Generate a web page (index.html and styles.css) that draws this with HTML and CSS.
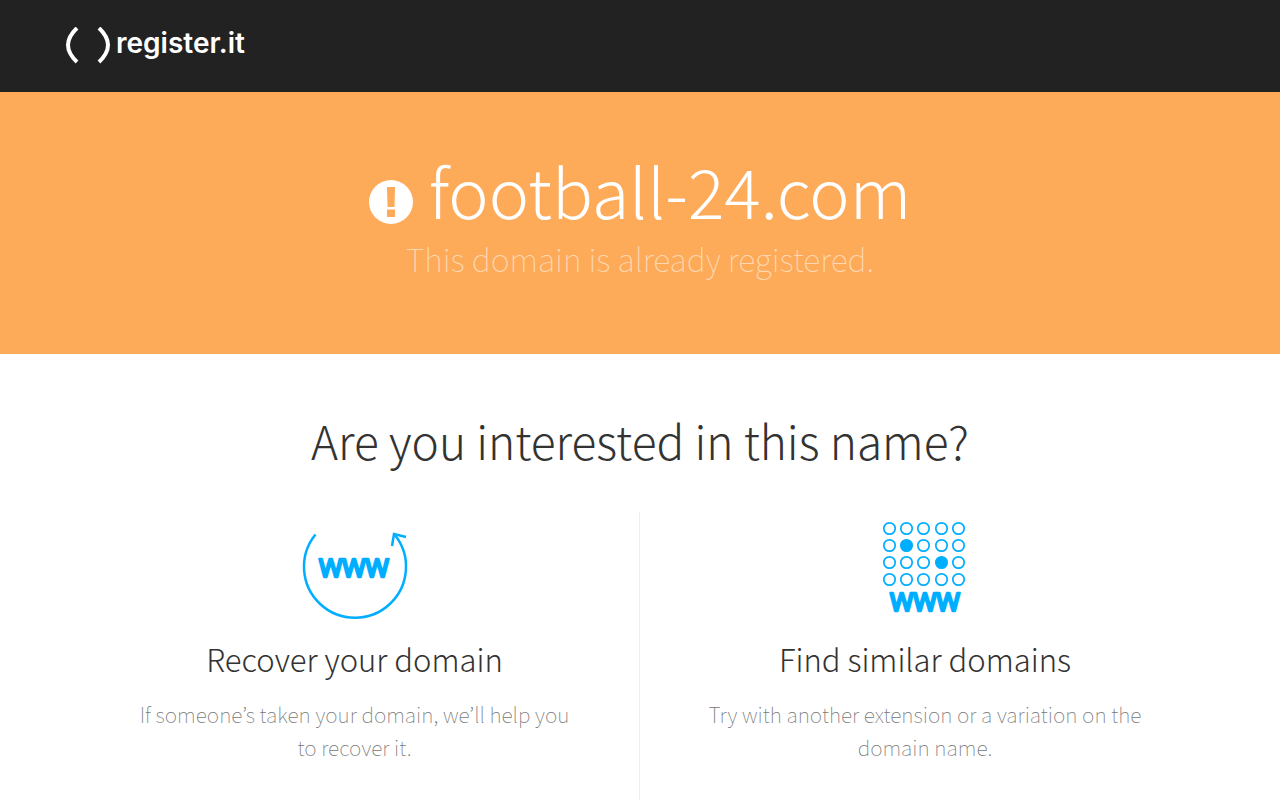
FILE: index.html
```
<!DOCTYPE html>
<html lang="en">

<head>
  <meta charset="UTF-8">
  <meta name="viewport" content="width=device-width, initial-scale=1">
  <title>football-24.com</title>
  <link rel="stylesheet" href="styles.css">
</head>

<body>
  <header class="header">
    <a class="logo" href="#">
      <svg class="logo-mark" width="46" height="38" viewBox="0 0 46 38" aria-hidden="true">
        <path d="M12 1 Q-6 18 12 35 M34 1 Q52 18 34 35" />
      </svg>
      <span class="logo-name">register.it</span>
    </a>
  </header>

  <section class="banner">
    <h1 class="banner-title">
      <svg class="banner-icon" width="44" height="44" viewBox="0 0 44 44" aria-hidden="true">
        <circle cx="22" cy="22" r="22" />
        <path d="M18 7h8l-.5 20h-7zM18 29.500h8v7.500h-8z" />
      </svg>
      <span>football-24.com</span>
    </h1>
    <p class="banner-text">This domain is already registered.</p>
  </section>

  <main class="main">
    <h2 class="main-title">Are you interested in this name?</h2>
    <div class="columns">
      <div class="column">
        <svg class="column-icon" width="110" height="110" viewBox="0 0 110 110" aria-hidden="true">
          <path class="line" d="M15.500 22.500 A51 51 0 1 0 94.500 22.500" />
          <path class="line" d="M92 34 L94 22 L106 25" />
          <text class="www" x="54" y="65" text-anchor="middle">WWW</text>
        </svg>
        <h3 class="column-title">Recover your domain</h3>
        <p class="column-text">If someone’s taken your domain, we’ll help you to recover it.</p>
      </div>
      <div class="column">
        <svg class="column-icon" width="110" height="110" viewBox="0 0 110 110" aria-hidden="true">
          <g class="dots">
            <circle cx="19.500" cy="16.500" r="5.700" /><circle cx="36.500" cy="16.500" r="5.700" /><circle cx="53.500" cy="16.500" r="5.700" /><circle cx="71.500" cy="16.500" r="5.700" /><circle cx="88.500" cy="16.500" r="5.700" />
            <circle cx="19.500" cy="33.500" r="5.700" /><circle class="full" cx="36.500" cy="33.500" r="5.700" /><circle cx="53.500" cy="33.500" r="5.700" /><circle cx="71.500" cy="33.500" r="5.700" /><circle cx="88.500" cy="33.500" r="5.700" />
            <circle cx="19.500" cy="50.500" r="5.700" /><circle cx="36.500" cy="50.500" r="5.700" /><circle cx="53.500" cy="50.500" r="5.700" /><circle class="full" cx="71.500" cy="50.500" r="5.700" /><circle cx="88.500" cy="50.500" r="5.700" />
            <circle cx="19.500" cy="67.500" r="5.700" /><circle cx="36.500" cy="67.500" r="5.700" /><circle cx="53.500" cy="67.500" r="5.700" /><circle cx="71.500" cy="67.500" r="5.700" /><circle cx="88.500" cy="67.500" r="5.700" />
          </g>
          <text class="www" x="55" y="99" text-anchor="middle">WWW</text>
        </svg>
        <h3 class="column-title">Find similar domains</h3>
        <p class="column-text">Try with another extension or a variation on the domain name.</p>
      </div>
    </div>
  </main>
</body>

</html>
```
FILE: styles.css
```
* {
  margin: 0;
  padding: 0;
  box-sizing: border-box;
}
body {
  font-family: "Noto Sans CJK KR", "Noto Sans", sans-serif;
  font-weight: 300;
  color: #333;
  background: #fff;
}

/* header */
.header {
  padding: 20px 65px;
  background: #222;
}
.logo {
  display: inline-flex;
  align-items: center;
  gap: 5px;
  height: 52px;
  color: #fff;
  text-decoration: none;
}
.logo-mark {
  fill: none;
  stroke: #fff;
  stroke-width: 4;
}
.logo-name {
  font: 600 28px/40px Inter, sans-serif;
  padding-bottom: 6px;
}

/* banner */
.banner {
  padding: 56px 20px 74px;
  text-align: center;
  color: #fff;
  background: #fdaa59;
}
.banner-title {
  display: flex;
  justify-content: center;
  align-items: center;
  gap: 16px;
  font-size: 68px;
  line-height: 84px;
  font-weight: 300;
}
.banner-icon {
  margin-top: 24px;
  fill: #fff;
}
.banner-icon path {
  fill: #fdaa59;
}
.banner-text {
  padding-top: 4px;
  font-size: 32px;
  line-height: 44px;
  font-weight: 100;
  color: #fed9b3;
}

/* main */
.main {
  max-width: 1140px;
  margin: 0 auto;
  padding-top: 54px;
}
.main-title {
  margin-bottom: 40px;
  font-size: 46px;
  line-height: 64px;
  font-weight: 300;
  text-align: center;
}
.columns {
  display: grid;
  grid-template-columns: 1fr 1fr;
}
.column {
  padding: 0 60px 60px;
  text-align: center;
}
.column:first-child {
  border-right: 1px solid #eee;
}
.column-icon {
  display: block;
  margin: 0 auto 15px;
}
.line, .dots {
  fill: none;
  stroke: #00aeff;
  stroke-width: 2.5;
}
.dots {
  stroke-width: 1.7;
}
.full {
  fill: #00aeff;
}
.www {
  font: 400 25px "Noto Sans", sans-serif;
  fill: #00aeff;
  stroke: #00aeff;
  stroke-width: 2.5;
  stroke-linejoin: round;
}
.column-title {
  margin-bottom: 17px;
  font-size: 31px;
  line-height: 44px;
  font-weight: 300;
}
.column-text {
  font-size: 21px;
  line-height: 33px;
  font-weight: 100;
  color: #777;
}
```
